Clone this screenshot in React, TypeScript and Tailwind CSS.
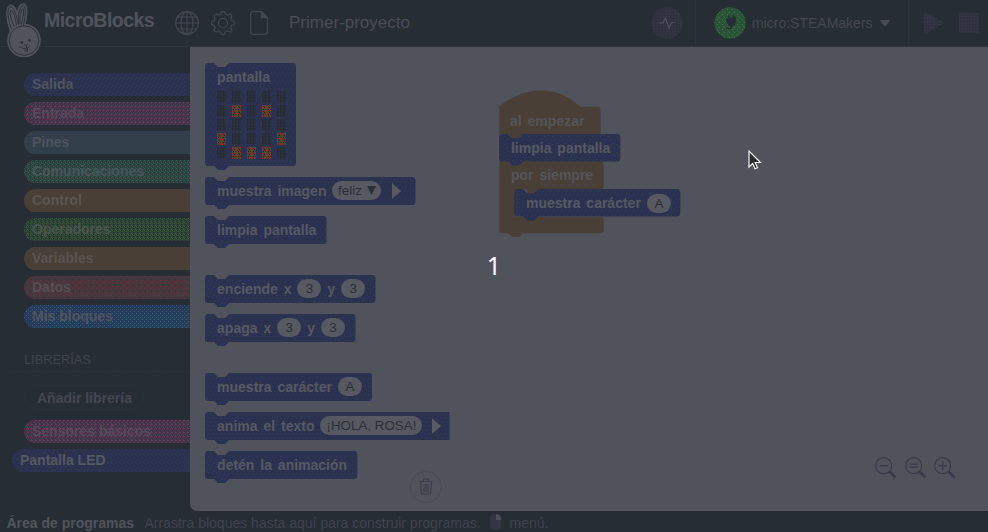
import React from "react";

const sans = "font-['Liberation_Sans',Arial,sans-serif]";

type Dot = [number, number, string];

function Pattern({ id, base, size, dots }: { id: string; base: string; size: number; dots: Dot[] }) {
  return (
    <pattern id={id} width={size} height={size} patternUnits="userSpaceOnUse">
      <rect width={size} height={size} fill={base} />
      {dots.map(([x, y, c], i) => (
        <rect key={i} x={x} y={y} width="1" height="1" fill={c} />
      ))}
    </pattern>
  );
}

function Patterns() {
  return (
    <svg className="absolute h-0 w-0" shapeRendering="crispEdges">
      <defs>
        <Pattern id="blue" base="#2b324f" size={8} dots={[[1, 1, "#2f386c"], [5, 2, "#373d4c"], [3, 5, "#2f386c"], [7, 6, "#2f386c"], [0, 4, "#373d4c"]]} />
        <Pattern id="magenta" base="#3b3642" size={4} dots={[[0, 0, "#6c336b"], [2, 1, "#6c336b"], [1, 2, "#7b2860"], [3, 3, "#6c336b"], [3, 0, "#51485a"], [1, 1, "#33303a"]]} />
        <Pattern id="teal" base="#323e49" size={4} dots={[[0, 0, "#2f4050"], [2, 2, "#2c4151"], [1, 3, "#394248"]]} />
        <Pattern id="green" base="#2e4040" size={4} dots={[[0, 0, "#2c624a"], [2, 1, "#26343a"], [1, 2, "#2c624a"], [3, 3, "#404a52"], [3, 1, "#2c5646"]]} />
        <Pattern id="lime" base="#2f4036" size={4} dots={[[0, 0, "#2f632c"], [2, 1, "#2f632c"], [1, 2, "#26302f"], [3, 3, "#2f632c"], [1, 0, "#252c2d"]]} />
        <Pattern id="red" base="#43393a" size={6} dots={[[0, 0, "#7e2450"], [3, 1, "#5a3650"], [1, 3, "#38312f"], [4, 4, "#7e2450"], [2, 5, "#57383f"]]} />
        <Pattern id="azure" base="#293a5e" size={4} dots={[[0, 0, "#2c6463"], [2, 2, "#2c6463"], [3, 0, "#2b3168"], [1, 3, "#28315c"]]} />
        <Pattern id="brown" base="#493f36" size={8} dots={[]} />
        <Pattern id="ink" base="#2a2f3c" size={3} dots={[[0, 0, "#252a35"], [0, 1, "#252a35"], [2, 2, "#2e334a"]]} />
        <Pattern id="lit" base="#514434" size={5} dots={[[0, 1, "#d01512"], [3, 0, "#c41b12"], [2, 2, "#251f20"], [4, 3, "#c41b12"], [1, 4, "#211f20"], [3, 4, "#34302d"], [1, 1, "#34302d"]]} />
        <Pattern id="plug" base="#2b5136" size={5} dots={[[0, 0, "#298040"], [3, 2, "#298040"], [1, 3, "#35503e"], [4, 4, "#2c653a"]]} />
        <Pattern id="slate" base="#30333f" size={3} dots={[[0, 0, "#373944"], [1, 2, "#2b2f3d"]]} />
      </defs>
    </svg>
  );
}

const palette: Record<string, string> = { blue: "url(#blue)", magenta: "url(#magenta)", teal: "url(#teal)", green: "url(#green)", lime: "url(#lime)", red: "url(#red)", azure: "url(#azure)", brown: "url(#brown)" };

function Category({ name, fill, text = "text-[#50545d]", active = false }: { name: string; fill: string; text?: string; active?: boolean }) {
  return (
    <div className={`relative h-[23px] overflow-hidden rounded-l-full ${active ? "ml-3" : "ml-6"}`}>
      <svg className="absolute inset-0 h-full w-full">
        <rect width="100%" height="100%" fill={palette[fill]} />
      </svg>
      <div className={`relative pl-2 text-[14px] leading-[23px] font-bold ${text}`}>{name}</div>
    </div>
  );
}

function Block({ w, h = 28, square = false, className = "", children }: { w: number; h?: number; square?: boolean; className?: string; children: React.ReactNode }) {
  const right = square ? `H${w} V${h}` : `H${w - 3} Q${w} 0 ${w} 3 V${h - 3} Q${w} ${h} ${w - 3} ${h}`;
  const d = `M3 0 H9 L13 4 H20 L24 0 ${right} H24 L20 ${h + 4} H13 L9 ${h} H3 Q0 ${h} 0 ${h - 3} V3 Q0 0 3 0Z`;
  return (
    <div className={`relative shrink-0 ${className}`} style={{ width: w, height: h }}>
      <svg className="absolute top-0 left-0 overflow-visible" width={w} height={h}>
        <path d={d} fill="url(#blue)" />
      </svg>
      <div className="relative flex h-7 items-center pl-[11.7px] text-[14px] leading-none font-bold whitespace-nowrap text-[#565962] [word-spacing:2px]">{children}</div>
    </div>
  );
}

function Slot({ children, className = "w-6" }: { children: React.ReactNode; className?: string }) {
  return (
    <span className={`flex h-[19px] items-center justify-center rounded-full bg-[#565961] text-[13.4px] font-normal text-[#2d2f35] [word-spacing:0px] ${className}`}>
      {children}
    </span>
  );
}

function Arrow({ className = "" }: { className?: string }) {
  return (
    <svg className={className} width="9" height="16" viewBox="0 0 9 16">
      <path d="M0 0L9 8L0 16Z" fill="#575a62" />
    </svg>
  );
}

const litCells = [6, 8, 15, 19, 21, 22, 23];

function Rabbit() {
  return (
    <svg width="38" height="56" viewBox="0 0 38 56" fill="#50535b" stroke="#50535b" strokeLinejoin="round">
      <g strokeWidth="1.6">
        <path d="M5.5 29C1.5 19 .5 5 5 3.5C9 2 11 8 12.5 13C13 6 15 1.5 19 2C23 3 21.5 15 19.5 24Z" />
        <circle cx="19" cy="38.5" r="16" />
      </g>
      <g stroke="#2e323a" strokeWidth="1" fill="none">
        <path d="M6.5 27C3 19 1.5 6 5 4.8C9 4 12 15 13.5 22.5C12.5 14 14.5 3 18.8 3.4C21.5 5 20 17 18.5 22.7" />
        <path d="M9.5 24.5C6 18 3.5 9 6 8C8.5 9 10.5 17 11.5 23.5M15 22.5C14.5 14 16 7 18 6.5C19.5 9 17.5 16 16.5 22.5" />
        <circle cx="19" cy="38.5" r="14.8" />
      </g>
      <g fill="#292e37" stroke="none">
        <circle cx="17" cy="40.5" r="1.3" />
        <circle cx="24.5" cy="38.5" r="1.3" />
      </g>
      <path d="M19.5 42.5L21.5 43.5L23 42M21.5 43.5V46M14 44.5Q21 49 24.5 44.5M20 47V49H22.5V46.5" stroke="#292e37" fill="none" strokeWidth=".9" />
    </svg>
  );
}

const gear = Array.from({ length: 64 }, (_, i) => {
  const a = (i / 64) * Math.PI * 2;
  const r = 10.2 + Math.max(-1.3, Math.min(1.3, Math.cos(a * 8) * 2));
  return `${12 + r * Math.cos(a)},${12 + r * Math.sin(a)}`;
}).join(" ");

function Header() {
  return (
    <header className="flex h-[47px] shrink-0 items-center border-b border-[#30333f]">
      <div className="h-[47px] w-[38px] shrink-0 pt-[2px] pl-[5px]"><Rabbit /></div>
      <div className="-mt-[5px] w-[137px] shrink-0 pl-[6px] text-[19.5px] leading-none font-bold tracking-[-0.53px] text-[#50535b]">MicroBlocks</div>
      <svg className="shrink-0" width="24" height="24" fill="none" stroke="#444753" strokeWidth="1.2">
        <circle cx="12" cy="12" r="11.3" />
        <ellipse cx="12" cy="12" rx="6" ry="11.3" />
        <path d="M12 .7V23.3M.7 12H23.3M2.5 6H21.5M2.5 18H21.5" />
      </svg>
      <svg className="ml-3 shrink-0" width="24" height="24" fill="none" stroke="#444753" strokeWidth="1.2">
        <polygon points={gear} strokeLinejoin="round" />
        <circle cx="12" cy="12" r="4.5" />
      </svg>
      <svg className="ml-[15px] shrink-0" width="20" height="24" fill="none" stroke="#444753" strokeWidth="1.2">
        <path d="M3 .7H11.5L17.4 6.6V21Q17.4 23.3 15 23.3H3Q.7 23.3 .7 21V3Q.7 .7 3 .7Z" />
        <path d="M11.5 1V6.6H17Z" fill="#444753" />
      </svg>
      <div className="-mt-[2px] ml-[19px] w-[362px] shrink-0 text-[17px] leading-none text-[#4b4c56]">Primer-proyecto</div>
      <svg className="shrink-0" width="32" height="32">
        <circle cx="16" cy="16" r="15.7" fill="url(#slate)" />
        <path d="M8.5 16H12L14.5 11L18 21L20.5 15.5H23.5" fill="none" stroke="#4e515c" strokeWidth="1.2" />
      </svg>
      <div className="ml-[12px] flex h-full w-[214px] shrink-0 items-center border-x border-[#30333f] pl-[18px]">
        <svg width="32" height="32">
          <circle cx="16" cy="16" r="15.7" fill="url(#plug)" />
          <path d="M14.5 8.5L15.5 12M19 7.5L19.5 11M13 12.5L21 10.5Q22 17 19 18.5L16 19Q13 17 13 12.5Z" fill="#282e38" stroke="#282e38" strokeWidth="1.4" />
          <path d="M17.5 18.5L17 21.5H12.5" fill="none" stroke="#282e38" strokeWidth="1.6" />
        </svg>
        <span className="ml-[6px] text-[14px] leading-none text-[#454753]">micro:STEAMakers</span>
        <svg className="ml-[7px]" width="10" height="6"><path d="M0 0H10L6 6H4Z" fill="#484b56" /></svg>
      </div>
      <svg className="ml-[15px] shrink-0" width="20" height="22"><path d="M0 1Q0 0 1 0L19 10Q20 11 19 12L1 22Q0 22 0 21Z" fill="url(#slate)" /></svg>
      <svg className="ml-[15px] shrink-0" width="20" height="20"><rect width="20" height="20" rx="1" fill="url(#slate)" /></svg>
    </header>
  );
}

function ZoomIcon({ d }: { d: string }) {
  return (
    <svg width="22" height="22" fill="none" stroke="#363a4b">
      <circle cx="8.7" cy="8.7" r="8" strokeWidth="1.2" />
      <path d={d} strokeWidth="1.3" />
      <path d="M14.5 14.5L20.5 20.5" strokeWidth="2.6" />
    </svg>
  );
}

function Script() {
  return (
    <div className="absolute top-[43px] left-[309px] h-[150px] w-[190px] text-[14px] leading-none font-bold text-[#54555a] [word-spacing:2px]">
      <svg className="absolute inset-0 overflow-visible" width="190" height="150" fill="#493f36">
        <path d="M.3 16.5Q20 .5 42 .5Q64 .5 81 16.7H98.5Q101.5 16.7 101.5 19.5V44H24L20 48H13L9 44H.3Z" />
        <path d="M.3 71H101Q104.7 71 104.7 74V96Q104.7 99.5 101 99.5H39V104H28V99.5H18Q15 99.5 15 102V124Q15 127 18 127H101Q104.7 127 104.7 130V140Q104.7 143.3 101 143.3H24L20 147H13L9 143.3H3.3Q.3 143.3 .3 140Z" />
      </svg>
      <div className="absolute top-[24px] left-[11px]">al empezar</div>
      <div className="absolute top-[78px] left-[12px]">por siempre</div>
      <div className="absolute top-[43.7px] left-[.3px]"><Block w={121.3} h={27.5}>limpia pantalla</Block></div>
      <div className="absolute top-[99.4px] left-[15.3px]">
        <Block w={166.3} h={27.5}>muestra carácter<Slot className="ml-[6px] w-6">A</Slot></Block>
      </div>
    </div>
  );
}

export default function App() {
  return (
    <div className={`relative flex h-[532px] w-[988px] flex-col overflow-hidden bg-[#272d35] ${sans}`}>
      <Patterns />
      <main className="order-2 flex h-[464px] shrink-0">
        <aside className="w-[190px] shrink-0 pt-[26px]">
          <div className="flex flex-col gap-[6px]">
            <Category name="Salida" fill="blue" />
            <Category name="Entrada" fill="magenta" text="text-[#58485a]" />
            <Category name="Pines" fill="teal" />
            <Category name="Comunicaciones" fill="green" text="text-[#4a5559]" />
            <Category name="Control" fill="brown" text="text-[#5a5652]" />
            <Category name="Operadores" fill="lime" text="text-[#4b544f]" />
            <Category name="Variables" fill="brown" text="text-[#5a5352]" />
            <Category name="Datos" fill="red" text="text-[#594d55]" />
            <Category name="Mis bloques" fill="azure" />
          </div>
          <div className="mt-[23px] ml-3 h-[21px] border-b border-dashed border-[#2d313b] pl-3 text-[12.8px] leading-[17px] text-[#41444e]">LIBRERÍAS</div>
          <div className="mt-[13px] ml-6 flex h-[25px] w-[120px] items-center rounded-full border border-[#2b2f39] pt-px pl-3 text-[14px] leading-none font-bold text-[#454650]">Añadir librería</div>
          <div className="mt-[10px] flex flex-col gap-[6px]">
            <Category name="Sensores básicos" fill="magenta" text="text-[#58485a]" />
            <Category name="Pantalla LED" fill="blue" text="text-[#555861]" active />
          </div>
        </aside>
        <section className="relative flex flex-1 overflow-hidden rounded-bl-[7px] bg-[#50535b]">
          <div className="flex w-[260px] flex-col pt-[15.5px] pl-[15.4px]">
            <Block w={91} h={103}>
              pantalla
              <div className="absolute top-[28.5px] left-[12px] grid grid-cols-5 gap-x-[6px] gap-y-[2px]">
                {Array.from({ length: 25 }, (_, i) => (
                  <svg key={i} width="9" height="12"><rect width="9" height="12" fill={litCells.includes(i) ? "url(#lit)" : "url(#ink)"} /></svg>
                ))}
              </div>
            </Block>
            <Block w={210.5} className="mt-[11px]">
              muestra imagen
              <Slot className="ml-[6px] w-[49px] gap-[5px] bg-[#50535c]">feliz<svg width="9" height="9"><path d="M0 0H9L4.5 9Z" fill="#2d3037" /></svg></Slot>
              <Arrow className="ml-[11px]" />
            </Block>
            <Block w={121.5} className="mt-[11px]">limpia pantalla</Block>
            <Block w={170.5} className="mt-[31px]">
              enciende x<Slot className="ml-[6px] w-6">3</Slot><span className="ml-[6px]">y</span><Slot className="ml-[6px] w-6">3</Slot>
            </Block>
            <Block w={150.5} className="mt-[11px]">
              apaga x<Slot className="ml-[6px] w-6">3</Slot><span className="ml-[6px]">y</span><Slot className="ml-[6px] w-6">3</Slot>
            </Block>
            <Block w={167} className="mt-[31px]">muestra carácter<Slot className="ml-[6px] w-6">A</Slot></Block>
            <Block w={244.6} square className="mt-[11px]">
              anima el texto<Slot className="ml-[6px] w-[102px]">¡HOLA, ROSA!</Slot><Arrow className="ml-[10px]" />
            </Block>
            <Block w={152.3} className="mt-[11px]">detén la animación</Block>
          </div>
          <Script />
          <svg className="absolute top-[424px] left-[220px]" width="32" height="32" fill="none" stroke="#393c4a">
            <circle cx="16" cy="16" r="15.4" strokeDasharray="2 1" strokeOpacity=".5" />
            <path d="M9.5 10.5H22.5M13.5 10V8H18.5V10M10.5 11L11.5 23H20.5L21.5 11M14 13V21M16 13V21M18 13V21" />
          </svg>
          <div className="absolute top-[410px] left-[685px] flex gap-[7.5px]">
            <ZoomIcon d="M4.5 8.7H13" />
            <ZoomIcon d="M4.5 7.2H13M4.5 10.2H13" />
            <ZoomIcon d="M4.5 8.7H13M8.7 4.5V13" />
          </div>
        </section>
      </main>
      <div className="relative order-1 h-[47px] shrink-0"><Header /></div>
      <footer className="order-3 flex h-[21px] items-center pt-[3px] pl-[6.5px] text-[14px] leading-none whitespace-nowrap">
        <span className="w-[138px] font-bold text-[#50545c]">Área de programas</span>
        <span className="w-[345px] text-[#404350]">Arrastra bloques hasta aquí para construir programas.</span>
        <svg className="-mt-[2px]" width="11" height="16">
          <path d="M5 0Q0 0 0 5V11Q0 16 5.5 16Q11 16 11 11V5Q11 0 5 0Z" fill="#343743" />
          <path d="M6 0V6H11V4Q10 0 6 0Z" fill="#4c4f5a" />
        </svg>
        <span className="ml-[9px] text-[#404350]">menú.</span>
      </footer>
      <div className="absolute inset-0 flex items-center justify-center pb-[2px] font-['Noto_Sans',sans-serif] text-[25px] leading-none text-white">1</div>
      <svg className="absolute top-[150px] left-[748px]" width="14" height="21">
        <path d="M1 1V17L4.7 13.5L7 18.8L9.5 17.7L7.2 12.5H12.5Z" fill="#2a2b2f" stroke="#f3f3f3" strokeWidth="1.2" />
      </svg>
    </div>
  );
}
